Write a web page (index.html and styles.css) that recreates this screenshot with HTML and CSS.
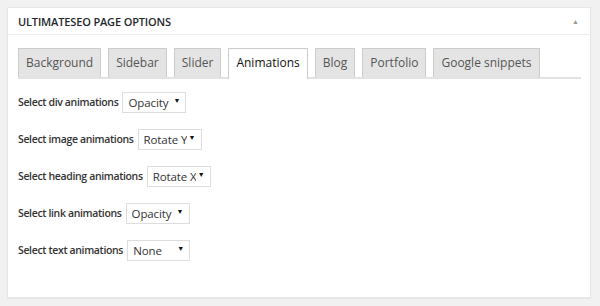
FILE: index.html
```html
<!DOCTYPE html>
<html lang="en">
<head>
    <meta charset="UTF-8">
    <meta name="viewport" content="width=device-width, initial-scale=1.0">
    <title>UltimateSEO Page Options</title>
    <link rel="stylesheet" href="styles.css">
</head>
<body>
    <div class="postbox">
        <div class="postbox-header">
            <h2>ULTIMATESEO PAGE OPTIONS</h2>
            <span class="toggle">&#9650;</span>
        </div>
        <div class="inside">
            <ul class="tabs">
                <li>Background</li>
                <li>Sidebar</li>
                <li>Slider</li>
                <li class="active">Animations</li>
                <li>Blog</li>
                <li>Portfolio</li>
                <li>Google snippets</li>
            </ul>

            <div class="option">
                <label for="div-anim">Select div animations</label>
                <span class="select-wrap">
                    <select id="div-anim" class="w-opacity">
                        <option>Opacity</option>
                    </select>
                </span>
            </div>
            <div class="option">
                <label for="image-anim">Select image animations</label>
                <span class="select-wrap">
                    <select id="image-anim" class="w-rotate">
                        <option>Rotate Y</option>
                    </select>
                </span>
            </div>
            <div class="option">
                <label for="heading-anim">Select heading animations</label>
                <span class="select-wrap">
                    <select id="heading-anim" class="w-rotate">
                        <option>Rotate X</option>
                    </select>
                </span>
            </div>
            <div class="option">
                <label for="link-anim">Select link animations</label>
                <span class="select-wrap">
                    <select id="link-anim" class="w-opacity">
                        <option>Opacity</option>
                    </select>
                </span>
            </div>
            <div class="option">
                <label for="text-anim">Select text animations</label>
                <span class="select-wrap">
                    <select id="text-anim" class="w-none">
                        <option>None</option>
                    </select>
                </span>
            </div>
        </div>
    </div>
</body>
</html>
```

FILE: styles.css
```css
body {
    margin: 0;
    padding: 7px;
    background-color: #f1f1f1;
    font-family: "Open Sans", "Noto Sans", sans-serif;
    color: #444;
}
.postbox {
    width: 582px;
    height: 289px;
    background-color: #fff;
    border: 1px solid #e5e5e5;
    box-shadow: 0 1px 1px rgba(0, 0, 0, 0.04);
}
.postbox-header {
    display: flex;
    align-items: center;
    justify-content: space-between;
    height: 26px;
    padding: 0 10px;
    border-bottom: 1px solid #eee;
}
.postbox-header h2 {
    margin: 0;
    font-size: 11px;
    font-weight: 600;
    letter-spacing: -0.15px;
    color: #23282d;
}
.toggle {
    font-size: 7px;
    color: #999;
    margin-right: 1px;
}
.inside {
    padding: 13px 9px 0 10px;
}
.tabs {
    display: flex;
    gap: 7px;
    margin: 0;
    padding: 0;
    list-style: none;
    border-bottom: 2px solid #e2e2e2;
    width: 563px;
}
.tabs li {
    height: 28px;
    line-height: 28px;
    padding: 0 7px;
    margin-bottom: -1px;
    font-size: 12px;
    color: #555;
    background-color: #e4e4e4;
    border: 1px solid #ccc;
    border-bottom: none;
}
.tabs li.active {
    background-color: #fff;
    color: #111;
    margin-bottom: -2px;
    height: 30px;
}
.option {
    display: flex;
    align-items: center;
    gap: 4px;
    margin-top: 12px;
    height: 21px;
}
.option + .option {
    margin-top: 16px;
}
.option label {
    font-size: 10.5px;
    font-weight: 600;
    letter-spacing: -0.35px;
    color: #333;
}
.select-wrap {
    position: relative;
    display: inline-block;
}
.select-wrap::after {
    content: "\25BC";
    position: absolute;
    right: 6px;
    top: 6px;
    font-size: 7px;
    color: #111;
    pointer-events: none;
}
select {
    appearance: none;
    -webkit-appearance: none;
    height: 21px;
    padding: 0 14px 0 5px;
    font-family: inherit;
    font-size: 11.5px;
    letter-spacing: -0.1px;
    color: #333;
    background-color: #fff;
    border: 1px solid #ddd;
    border-radius: 0;
}
.w-opacity {
    width: 64px;
}
.w-rotate {
    width: 64px;
}
.w-none {
    width: 63px;
}
```
